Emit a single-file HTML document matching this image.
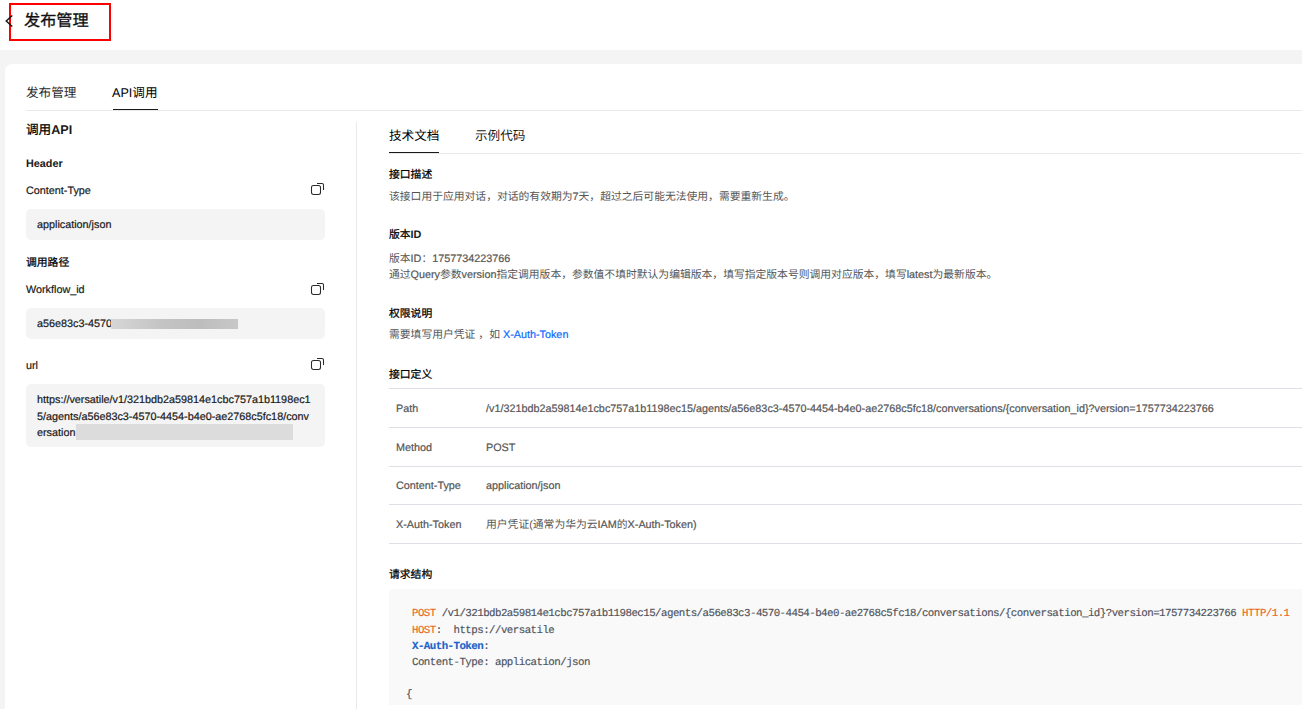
<!DOCTYPE html>
<html lang="zh-CN"><head><meta charset="utf-8">
<style>
html,body{margin:0;padding:0;}
body{text-rendering:geometricPrecision;width:1302px;height:709px;overflow:hidden;position:relative;background:#f4f4f4;font-family:"Liberation Sans",sans-serif;color:#191919;}
.a{position:absolute;white-space:nowrap;}
.top{position:absolute;left:0;top:0;width:1302px;height:50px;background:#fff;}
.red{position:absolute;left:9px;top:3px;width:98px;height:34px;border:2px solid #ff0000;}
.card{position:absolute;left:5px;top:64px;width:1320px;height:700px;background:#fff;border-radius:7px;}
.t108{font-size:10.8px;line-height:14px;}
.b{font-weight:bold;}
.hb{font-weight:500;-webkit-text-stroke:0.25px currentColor;color:#000;}
.hb b{-webkit-text-stroke:0;color:#191919;}
.box{position:absolute;left:26px;width:299px;background:#f4f4f4;border-radius:5px;}
.hl{position:absolute;height:1px;background:#e9e9e9;}
.tb{position:absolute;left:389px;width:913px;height:1px;background:#dde0e7;}
.gray{color:#555;}
.s{-webkit-text-stroke:0.2px currentColor;}
.blur{position:absolute;background:linear-gradient(90deg,#d6d6d6,#c4c4c4 40%,#bdbdbd 70%,#c8c8c8);}
.code{position:absolute;left:389px;top:589px;width:920px;height:116px;background:#f9f9f9;border-radius:4px 4px 0 0;}
.mono{font-family:"Liberation Mono",monospace;font-size:10.8px;line-height:16px;letter-spacing:-0.55px;color:#4f5259;-webkit-text-stroke:0.15px currentColor;}
.or{color:#ec661c;}
.bl{color:#1863c9;font-weight:bold;}
</style></head><body>
<div class="top"></div>
<div class="red"></div>
<svg class="a" style="left:4px;top:14px;z-index:5" width="10" height="14" viewBox="0 0 10 14"><path d="M8.3 1.5 L2.2 7 L8.3 12.5" fill="none" stroke="#151515" stroke-width="1.4"/></svg>
<div class="a hb" style="left:24px;top:11px;font-size:16.2px;line-height:20px;-webkit-text-stroke:0.3px currentColor;color:#111">发布管理</div>

<div class="card"></div>
<!-- tabs -->
<div class="a" style="left:26px;top:85px;font-size:12.6px;line-height:16px;color:#2b2b2b">发布管理</div>
<div class="a" style="left:112px;top:85px;font-size:12.6px;line-height:16px;color:#000">API调用</div>
<div class="hl" style="left:26px;top:110px;width:1276px;"></div>
<div class="a" style="left:113px;top:108.5px;width:45px;height:1.8px;background:#191919"></div>

<!-- left panel -->
<div class="a hb" style="left:26px;top:122px;font-size:12.6px;line-height:16px;">调用<b>API</b></div>
<div class="a b t108" style="left:26px;top:157px;">Header</div>
<div class="a t108 s" style="left:26px;top:184px;">Content-Type</div>
<div class="box" style="top:209px;height:31px;"></div>
<div class="a t108 s" style="left:37px;top:218px;">application/json</div>

<div class="a hb t108" style="left:26px;top:256px;">调用路径</div>
<div class="a t108 s" style="left:26px;top:283px;">Workflow_id</div>
<div class="box" style="top:308px;height:31px;"></div>
<div class="a t108 s" style="left:37px;top:317px;">a56e83c3-4570</div>
<div class="blur" style="left:111px;top:319px;width:127px;height:10px;"></div>

<div class="a t108 s" style="left:26px;top:359px;">url</div>
<div class="box" style="top:384px;height:63px;"></div>
<div class="a t108 s" style="left:37px;top:392px;line-height:16.6px;">https://versatile/v1/321bdb2a59814e1cbc757a1b1198ec1<br>5/agents/a56e83c3-4570-4454-b4e0-ae2768c5fc18/conv<br>ersation</div>
<div class="blur" style="left:76px;top:424px;width:217px;height:16px;background:#dcdcdc"></div>

<!-- copy icons -->
<svg class="a" style="left:310px;top:182px" width="16" height="14" viewBox="0 0 16 14"><rect x="1.5" y="3.5" width="9" height="9" rx="2" fill="none" stroke="#2a2a2a" stroke-width="1.05"/><path d="M7 1.5 H12 Q13.5 1.5 13.5 3 V8" fill="none" stroke="#2a2a2a" stroke-width="1.05"/></svg>
<svg class="a" style="left:310px;top:282px" width="16" height="14" viewBox="0 0 16 14"><rect x="1.5" y="3.5" width="9" height="9" rx="2" fill="none" stroke="#2a2a2a" stroke-width="1.05"/><path d="M7 1.5 H12 Q13.5 1.5 13.5 3 V8" fill="none" stroke="#2a2a2a" stroke-width="1.05"/></svg>
<svg class="a" style="left:310px;top:357px" width="16" height="14" viewBox="0 0 16 14"><rect x="1.5" y="3.5" width="9" height="9" rx="2" fill="none" stroke="#2a2a2a" stroke-width="1.05"/><path d="M7 1.5 H12 Q13.5 1.5 13.5 3 V8" fill="none" stroke="#2a2a2a" stroke-width="1.05"/></svg>

<div class="a" style="left:356px;top:122px;width:1px;height:600px;background:#e9e9e9"></div>

<!-- right panel -->
<div class="a" style="left:389px;top:128px;font-size:12.6px;line-height:16px;color:#000">技术文档</div>
<div class="a" style="left:475px;top:128px;font-size:12.6px;line-height:16px;color:#1a1a1a">示例代码</div>
<div class="hl" style="left:389px;top:153px;width:913px;"></div>
<div class="a" style="left:389px;top:151.5px;width:50px;height:1.8px;background:#191919"></div>

<div class="a hb t108" style="left:389px;top:168px;">接口描述</div>
<div class="a t108 gray" style="left:389px;top:190px;">该接口用于应用对话，对话的有效期为<span class="s">7</span>天，超过之后可能无法使用，需要重新生成。</div>
<div class="a hb t108" style="left:389px;top:228px;">版本<b>ID</b></div>
<div class="a t108 gray" style="left:389px;top:251px;line-height:16px;">版本<span class="s">ID</span>：<span class="s">1757734223766</span><br>通过<span class="s">Query</span>参数<span class="s">version</span>指定调用版本，参数值不填时默认为编辑版本，填写指定版本号则调用对应版本，填写<span class="s">latest</span>为最新版本。</div>
<div class="a hb t108" style="left:389px;top:307px;">权限说明</div>
<div class="a t108 gray" style="left:389px;top:328px;">需要填写用户凭证 ，如 <span style="color:#0b6bff"><span class="s">X-Auth-Token</span></span></div>
<div class="a hb t108" style="left:389px;top:368px;">接口定义</div>

<div class="tb" style="top:388px"></div>
<div class="tb" style="top:427px"></div>
<div class="tb" style="top:466px"></div>
<div class="tb" style="top:504px"></div>
<div class="tb" style="top:543px"></div>
<div class="a t108 gray s" style="left:396px;top:402px;">Path</div>
<div class="a t108 gray s" style="left:486px;top:402px;">/v1/321bdb2a59814e1cbc757a1b1198ec15/agents/a56e83c3-4570-4454-b4e0-ae2768c5fc18/conversations/{conversation_id}?version=1757734223766</div>
<div class="a t108 gray s" style="left:396px;top:441px;">Method</div>
<div class="a t108 gray s" style="left:486px;top:441px;">POST</div>
<div class="a t108 gray s" style="left:396px;top:479px;">Content-Type</div>
<div class="a t108 gray s" style="left:486px;top:479px;">application/json</div>
<div class="a t108 gray s" style="left:396px;top:518px;">X-Auth-Token</div>
<div class="a t108 gray" style="left:486px;top:518px;">用户凭证(通常为华为云<span class="s">IAM</span>的<span class="s">X-Auth-Token)</span></div>

<div class="a hb t108" style="left:389px;top:568px;">请求结构</div>
<div class="code"></div>
<div class="a mono" style="left:412px;top:606px;"><span class="or">POST</span> /v1/321bdb2a59814e1cbc757a1b1198ec15/agents/a56e83c3-4570-4454-b4e0-ae2768c5fc18/conversations/{conversation_id}?version=1757734223766 <span class="or">HTTP/1.1</span></div>
<div class="a mono" style="left:412px;top:623px;"><span class="or">HOST</span>:&nbsp; https://versatile</div>
<div class="a mono" style="left:412px;top:639px;"><span class="bl">X-Auth-Token</span>:</div>
<div class="a mono" style="left:412px;top:655px;">Content-Type: application/json</div>
<div class="a mono" style="left:406px;top:687px;">{</div>
</body></html>
